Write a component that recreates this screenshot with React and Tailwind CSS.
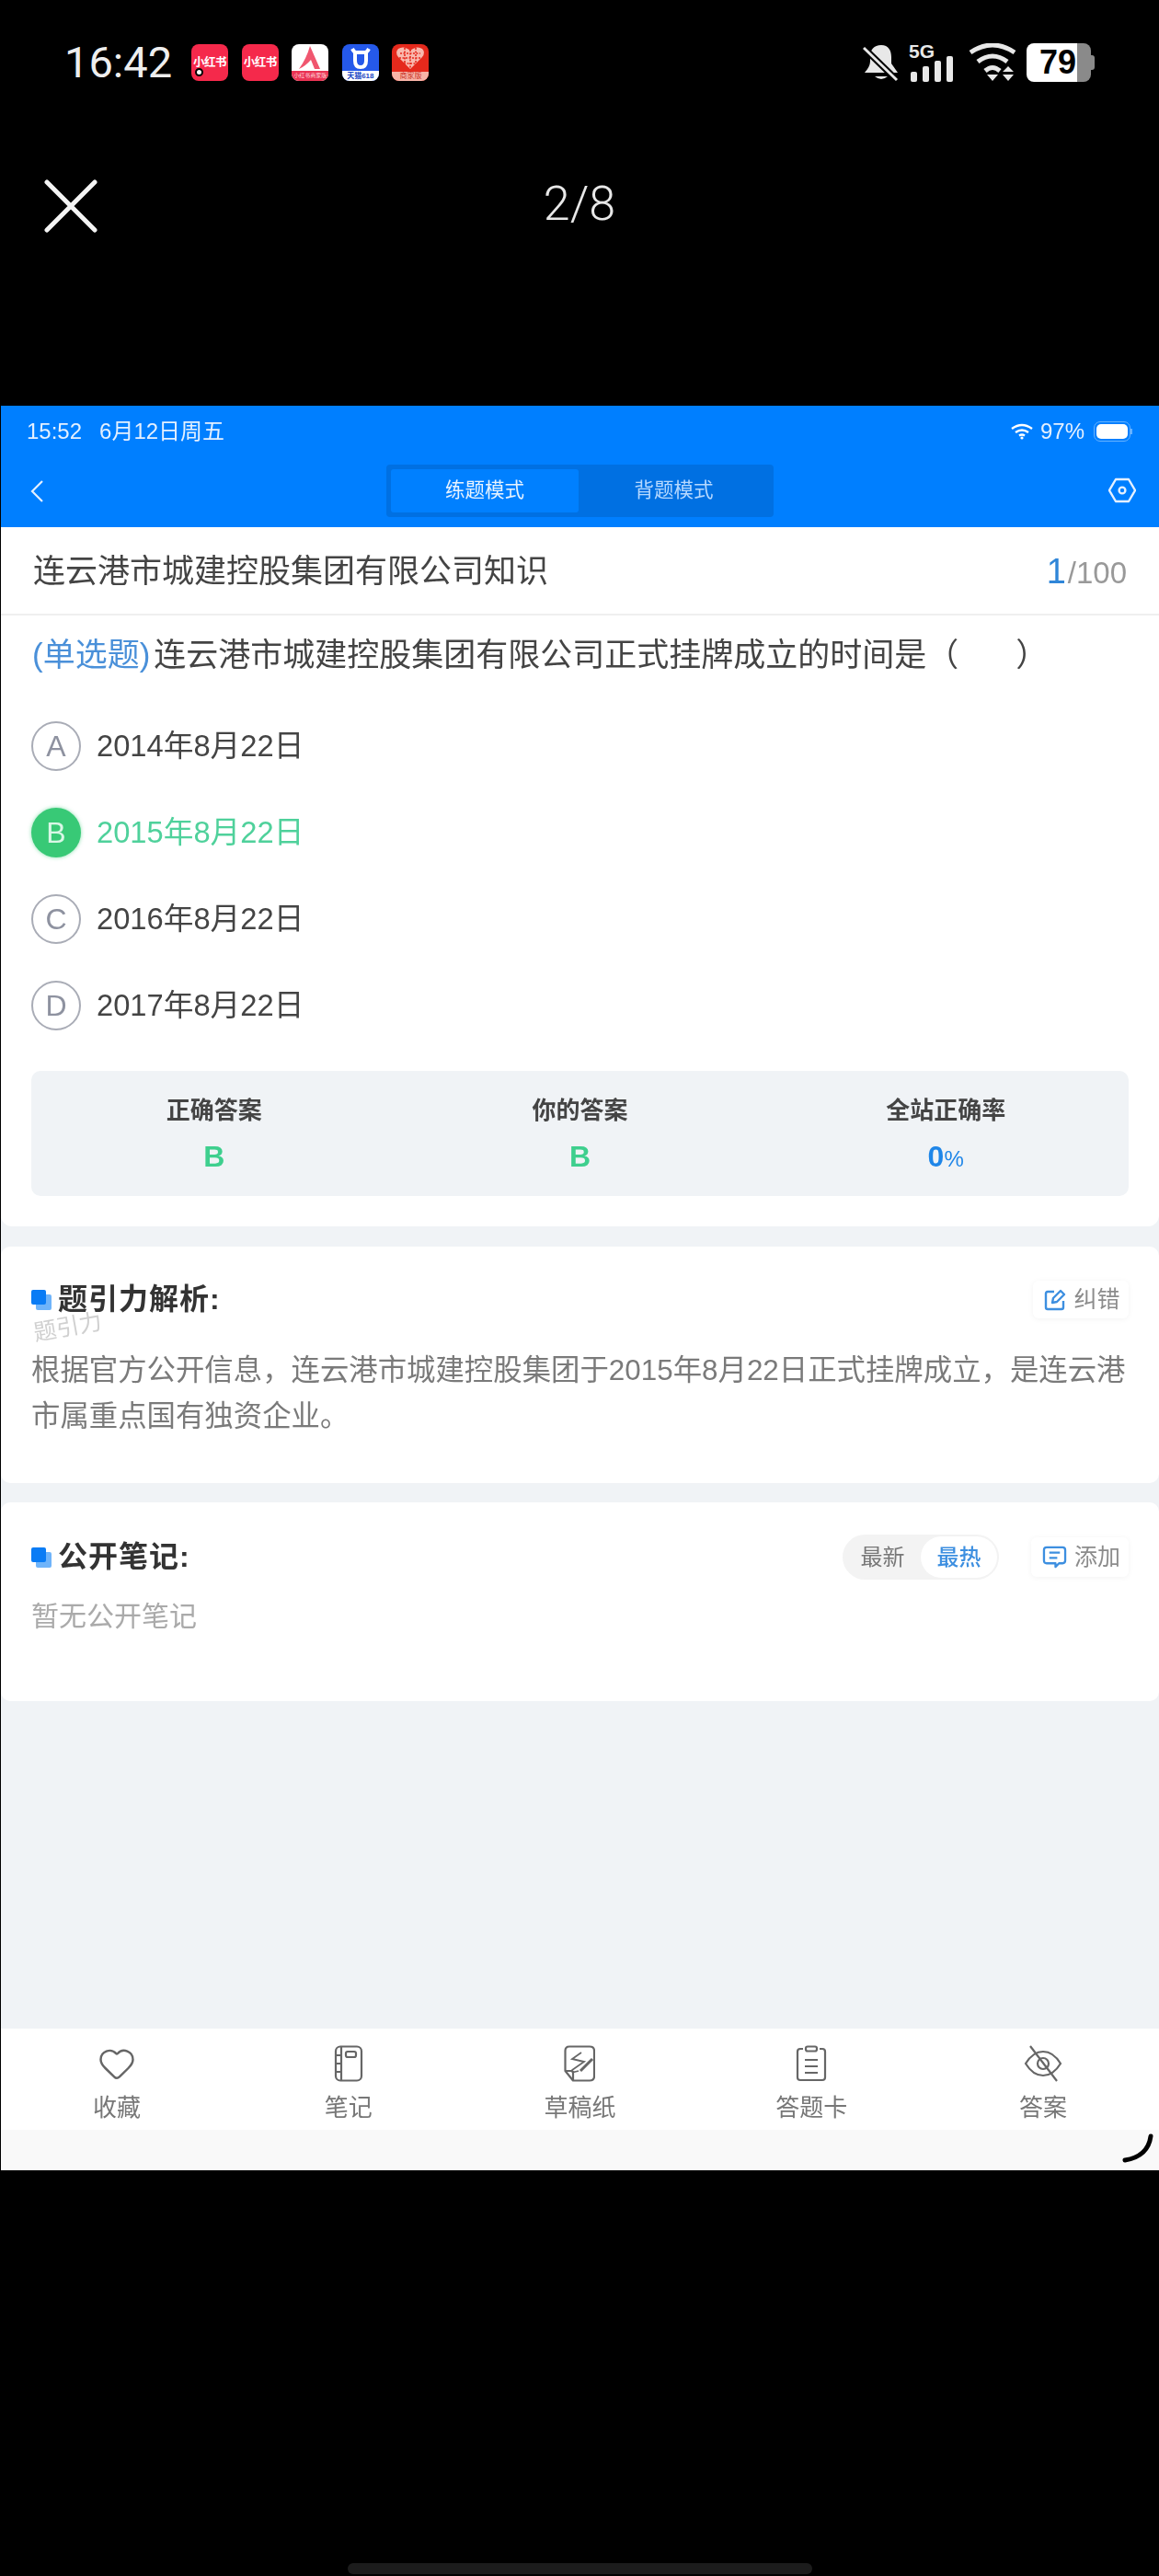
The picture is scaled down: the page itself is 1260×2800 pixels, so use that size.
import { Heart } from "lucide-react";

const options = [
  { key: "A", text: "2014年8月22日" },
  { key: "B", text: "2015年8月22日", correct: true },
  { key: "C", text: "2016年8月22日" },
  { key: "D", text: "2017年8月22日" },
];

const RedBookIcon = ({ dot }) => (
  <div className="relative w-[40px] h-[40px] rounded-[8px] bg-[#f5294b] flex items-center justify-center">
    <span className="text-white text-[12.5px] font-bold leading-none whitespace-nowrap tracking-[-0.5px]">小红书</span>
    {dot ? <span className="absolute left-[4px] bottom-[5px] w-[9px] h-[9px] rounded-full bg-white border-[2px] border-black" /> : null}
  </div>
);

const AppIcons = () => (
  <div className="flex gap-[14.6px] ml-[21px]">
    <RedBookIcon dot />
    <RedBookIcon />
    <div className="w-[40px] h-[40px] rounded-[8px] overflow-hidden bg-white flex flex-col">
      <svg viewBox="0 0 40 29" className="w-[40px] h-[29px]">
        <path d="M20 2 L31 27 L25 27 L21 17 Q15 24 8 27 Q16 16 20 2 Z" fill="#f0566f" />
      </svg>
      <div className="flex-1 bg-[#ea3353] text-[#ffd5dc] text-[6px] leading-[11px] text-center whitespace-nowrap">小红书商家版</div>
    </div>
    <div className="w-[40px] h-[40px] rounded-[8px] overflow-hidden bg-[#2559ea] flex flex-col">
      <svg viewBox="0 0 40 29" className="w-[40px] h-[29px]">
        <path d="M11 5 Q13 9 15 9 L25 9 Q27 9 29 5 M14 9 L14 18 Q14 25 20 25 Q26 25 26 18 L26 9" fill="none" stroke="#fff" strokeWidth="4" />
      </svg>
      <div className="flex-1 bg-white text-[#1c47c4] text-[8px] font-bold leading-[11px] text-center whitespace-nowrap">天猫618</div>
    </div>
    <div className="w-[40px] h-[40px] rounded-[8px] overflow-hidden bg-[#e5291c] flex flex-col">
      <svg viewBox="0 0 40 30" className="w-[40px] h-[30px]">
        <path d="M20 27 L7 14 Q3 9 7 5 Q13 1 20 7 Q27 1 33 5 Q37 9 33 14 Z" fill="#f8b9ae" />
        <path d="M20 6 V27 M9 10 H31 M8 15 H32 M13 21 H27 M14 4 L14 20 M26 4 L26 20" stroke="#e5291c" strokeWidth="1.6" strokeDasharray="2 1.5" fill="none" />
      </svg>
      <div className="flex-1 bg-[#f8b4a8] text-[#c9301f] text-[8px] leading-[10px] text-center whitespace-nowrap">商家版</div>
    </div>
  </div>
);

const PhoneStatusRight = () => (
  <div className="flex items-center ml-auto mr-[70px] h-[42px]">
    <svg viewBox="0 0 40 42" className="w-[40px] h-[42px]">
      <path d="M20 2 C28 2 31 8 31 15 L31 22 L38 32 L2 32 C5 28 8 25 8 19 L8 14 C8 7 12 2 20 2 Z" fill="#e8e8e8" />
      <path d="M13 36 Q20 42 27 36 Z" fill="#e8e8e8" />
      <path d="M1 5 L37 40" stroke="#000" strokeWidth="7" />
      <path d="M1 5 L37 40" stroke="#e8e8e8" strokeWidth="3" />
    </svg>
    <div className="relative w-[50px] h-[42px] ml-[12px]">
      <span className="absolute left-[-2px] top-[-3px] text-[#e8e8e8] text-[21px] font-bold leading-[24px]">5G</span>
      <div className="absolute left-0 bottom-0 flex items-end gap-[6px]">
        <span className="w-[7px] h-[11px] rounded-[2px] bg-[#e8e8e8]" />
        <span className="w-[7px] h-[17px] rounded-[2px] bg-[#e8e8e8]" />
        <span className="w-[7px] h-[23px] rounded-[2px] bg-[#e8e8e8]" />
        <span className="w-[7px] h-[28px] rounded-[2px] bg-[#e8e8e8]" />
      </div>
    </div>
    <svg viewBox="0 0 54 42" className="w-[54px] h-[42px] ml-[12px]">
      <path d="M3 10 Q27 -6 51 10" fill="none" stroke="#e8e8e8" strokeWidth="5" />
      <path d="M11 20 Q27 8 43 20" fill="none" stroke="#e8e8e8" strokeWidth="5" />
      <path d="M19 30 Q27 23 35 30" fill="none" stroke="#e8e8e8" strokeWidth="5" />
      <path d="M21 34 L33 34 L27 41 Z M38 31 L50 31 L44 25 Z M38 34 L50 34 L44 41 Z" fill="#e8e8e8" />
    </svg>
    <div className="flex items-center ml-[10px]">
      <div className="flex w-[70px] h-[42px] rounded-[8px] overflow-hidden">
        <div className="w-[55px] bg-white text-black text-[36px] font-bold leading-[42px] text-right pr-[1px]">79</div>
        <div className="flex-1 bg-[#8a8a8a]" />
      </div>
      <div className="w-[4px] h-[16px] rounded-r-[3px] bg-[#8a8a8a]" />
    </div>
  </div>
);

const TitleIcon = () => (
  <span className="relative w-[22px] h-[22px] shrink-0">
    <span className="absolute left-[5px] top-[5px] w-[17px] h-[17px] rounded-[2px] bg-[#6fb4fa]" />
    <span className="absolute left-0 top-0 w-[16px] h-[16px] rounded-[2px] bg-[#0a7cf5]" />
  </span>
);

const SectionTitle = ({ children }) => (
  <div className="flex items-center gap-[7px]">
    <TitleIcon />
    <span className="text-[32px] font-bold leading-[41px] tracking-[1px] text-[#333]">{children}</span>
  </div>
);

const SmallButton = ({ icon, label, className }) => (
  <div className={`flex items-center justify-center gap-[8px] pl-[3px] bg-white rounded-[6px] shadow-[0_1px_6px_rgba(0,0,0,0.05)] ${className}`}>
    {icon}
    <span className="text-[25px] leading-none text-[#8c8c8c]">{label}</span>
  </div>
);

const TabItem = ({ icon, label }) => (
  <div className="flex-1 flex flex-col items-center">
    <div className="h-[44px] flex items-center justify-center">{icon}</div>
    <span className="mt-[8px] text-[26px] leading-[36px] text-[#777]">{label}</span>
  </div>
);

const BottomTabs = () => (
  <div className="h-[110px] bg-white pt-[16px] flex">
    <TabItem label="收藏" icon={<Heart className="w-[42px] h-[42px] text-[#666]" strokeWidth={1.4} />} />
    <TabItem
      label="笔记"
      icon={
        <svg viewBox="0 0 32 40" className="w-[32px] h-[40px]" fill="none" stroke="#666" strokeWidth="2.2">
          <rect x="2" y="1.5" width="28" height="37" rx="5" />
          <path d="M8 2 V38 M2 11 H8 M2 20 H8 M2 29 H8" />
          <rect x="13" y="7" width="11" height="6" rx="2" />
        </svg>
      }
    />
    <TabItem
      label="草稿纸"
      icon={
        <svg viewBox="0 0 34 40" className="w-[34px] h-[40px]" fill="none" stroke="#666" strokeWidth="2.2">
          <path d="M10 38.5 L28 38.5 Q33 38.5 33 34 L33 6 Q33 1.5 28 1.5 L6 1.5 Q1.5 1.5 1.5 6 L1.5 28 Z" strokeLinejoin="round" />
          <path d="M1.5 28 L8 28 Q10 28 10 30 L10 38.5" />
          <path d="M19 8 L9 15 L22 18 L9 27 Q8 30 12 29 L16 28" strokeWidth="1.8" />
          <path d="M18 28 L31 15" strokeWidth="3" />
        </svg>
      }
    />
    <TabItem
      label="答题卡"
      icon={
        <svg viewBox="0 0 34 40" className="w-[34px] h-[40px]" fill="none" stroke="#666" strokeWidth="2.2">
          <path d="M8 4 L5 4 Q2 4 2 7 L2 35 Q2 38 5 38 L29 38 Q32 38 32 35 L32 7 Q32 4 29 4 L26 4" />
          <rect x="11" y="1.5" width="12" height="5" rx="2" />
          <path d="M10 16 H24 M10 23 H24 M10 30 H24" />
        </svg>
      }
    />
    <TabItem
      label="答案"
      icon={
        <svg viewBox="0 0 42 40" className="w-[42px] h-[40px]" fill="none" stroke="#666" strokeWidth="2.2">
          <path d="M2 20 Q10 7 21 7 Q32 7 40 20 Q32 33 21 33 Q10 33 2 20 Z" />
          <circle cx="21" cy="20" r="6" />
          <path d="M7 1 L36 39" />
        </svg>
      }
    />
  </div>
);

const App = () => {
  return (
    <div className="w-[1260px] h-[2800px] bg-black flex flex-col [font-family:'Liberation_Sans','Noto_Sans_CJK_SC',sans-serif]">
      <div className="h-[110px] pt-[47px] flex pl-[70px]">
        <div className="flex items-center h-[42px]">
          <span className="text-[47px] leading-[42px] font-normal text-[#eeeeee] [font-family:Roboto,sans-serif]">16:42</span>
          <AppIcons />
        </div>
        <PhoneStatusRight />
      </div>

      <div className="h-[331px] relative">
        <div className="pl-[48px] pt-[85px] flex">
          <svg viewBox="0 0 58 58" className="w-[58px] h-[58px]" fill="none" stroke="#f4f4f4" strokeWidth="5" strokeLinecap="round">
            <path d="M3 3 L55 55 M55 3 L3 55" />
          </svg>
        </div>
        <div className="absolute left-0 right-0 top-[84px] text-center text-[52px] leading-[56px] font-light text-[#e8e8e8] [font-family:Roboto,sans-serif]">2/8</div>
      </div>

      <div className="ml-px h-[1918px] bg-[#f0f3f6] flex flex-col blur-[0.4px]">
        <div className="h-[132px] bg-[#007fff]">
          <div className="h-[55px] flex items-center pl-[28px] pr-[29px] text-[24px] text-[#e4f0ff]">
            <span>15:52</span>
            <span className="ml-[19px]">6月12日周五</span>
            <svg viewBox="0 0 24 18" className="w-[24px] h-[18px] ml-auto" fill="none" stroke="#fff" strokeWidth="2.4">
              <path d="M1 6 Q12 -2 23 6 M5 10 Q12 5 19 10 M9 13.5 Q12 11.5 15 13.5" />
              <circle cx="12" cy="16" r="1.6" fill="#fff" stroke="none" />
            </svg>
            <span className="ml-[8px]">97%</span>
            <div className="ml-[10px] w-[40px] h-[22px] rounded-[7px] border border-[#66b2ff] p-[2px]">
              <div className="w-full h-full rounded-[5px] bg-white" />
            </div>
            <div className="w-[2px] h-[6px] bg-[#66b2ff]" />
          </div>
          <div className="h-[77px] flex items-start pl-[31px] pr-[25px]">
            <svg viewBox="0 0 16 24" className="w-[16px] h-[24px] mt-[26px]" fill="none" stroke="#e4f0ff" strokeWidth="2.2">
              <path d="M14 1 L3 12 L14 23" />
            </svg>
            <div className="ml-[372px] mt-[9px] w-[421px] h-[57px] bg-[#0070e2] rounded-[4px] flex p-[5px]">
              <div className="w-[204px] bg-[#0080ff] rounded-[3px] flex items-center justify-center text-[21.5px] text-[#e6f2ff]">练题模式</div>
              <div className="flex-1 flex items-center justify-center text-[21.5px] text-[#b5d8ff]">背题模式</div>
            </div>
            <svg viewBox="0 0 30 28" className="w-[30px] h-[28px] mt-[23px] ml-auto" fill="none" stroke="#e4f0ff" strokeWidth="2.4">
              <path d="M8 2 L22 2 L29 14 L22 26 L8 26 L1 14 Z" strokeLinejoin="round" />
              <circle cx="15" cy="14" r="3.4" />
            </svg>
          </div>
        </div>

        <div className="bg-white rounded-b-[12px] pb-[33px]">
          <div className="h-[96px] border-b-2 border-[#efefef] flex items-center justify-between pl-[35px] pr-[35px] pt-[3px]">
            <span className="text-[35px] text-[#444]">连云港市城建控股集团有限公司知识</span>
            <span className="flex items-baseline text-[#999]">
              <span className="text-[38px] font-medium text-[#2f86d8] mr-[2px]">1</span>
              <span className="text-[33px]">/100</span>
            </span>
          </div>
          <div className="h-[86px] flex items-center pl-[34px] text-[35px] text-[#444] whitespace-nowrap">
            <span className="text-[#4a90d9] mr-[4px]">(单选题)</span>
            <span>连云港市城建控股集团有限公司正式挂牌成立的时间是</span>
            <span>（</span>
            <span className="ml-[62px]">）</span>
          </div>
          <div className="pt-[9px] pl-[33px]">
            {options.map((opt) => (
              <div key={opt.key} className="h-[94px] flex items-center">
                {opt.correct ? (
                  <span className="w-[54px] h-[54px] rounded-full bg-[#38c976] shadow-[0_0_4px_rgba(56,201,118,0.6)] text-[#d9f7e6] flex items-center justify-center text-[32px]">{opt.key}</span>
                ) : (
                  <span className="w-[54px] h-[54px] rounded-full border-2 border-[#a9acb6] text-[#8e92a0] flex items-center justify-center text-[32px]">{opt.key}</span>
                )}
                <span className={`ml-[17px] text-[32.7px] ${opt.correct ? "text-[#4fd19b]" : "text-[#444]"}`}>{opt.text}</span>
              </div>
            ))}
          </div>
          <div className="mt-[24px] ml-[33px] mr-[33px] h-[136px] rounded-[10px] bg-[#f0f3f6] grid grid-cols-3 text-center">
            <div className="pt-[25px]">
              <div className="text-[26px] font-bold leading-[36px] text-[#444]">正确答案</div>
              <div className="mt-[14px] text-[32px] font-bold leading-[36px] text-[#3ecf8e]">B</div>
            </div>
            <div className="pt-[25px]">
              <div className="text-[26px] font-bold leading-[36px] text-[#444]">你的答案</div>
              <div className="mt-[14px] text-[32px] font-bold leading-[36px] text-[#3ecf8e]">B</div>
            </div>
            <div className="pt-[25px]">
              <div className="text-[26px] font-bold leading-[36px] text-[#444]">全站正确率</div>
              <div className="mt-[14px] text-[32px] font-bold leading-[36px] text-[#1f86e8]">
                0<span className="text-[24px] font-normal">%</span>
              </div>
            </div>
          </div>
        </div>

        <div className="relative mt-[22px] h-[257px] bg-white rounded-[10px] pt-[37px] pl-[33px] pr-[33px]">
          <div className="flex items-center justify-between">
            <SectionTitle>题引力解析:</SectionTitle>
            <SmallButton
              className="w-[104px] h-[41px]"
              label="纠错"
              icon={
                <svg viewBox="0 0 24 24" className="w-[24px] h-[24px]" fill="none" stroke="#3d8fe0" strokeWidth="2.4">
                  <path d="M11 3 L4 3 Q2 3 2 5 L2 20 Q2 22 4 22 L19 22 Q21 22 21 20 L21 13" />
                  <path d="M9 15 L10 10 L18 2 L22 6 L14 14 Z" strokeLinejoin="round" />
                </svg>
              }
            />
          </div>
          <div className="absolute left-[35px] top-[73px] text-[25px] leading-[28px] text-[#d0d0d0] -rotate-[10deg]">题引力</div>
          <p className="mt-[32px] text-[31.4px] leading-[50px] text-[#7a7a7a] whitespace-nowrap">
            根据官方公开信息，连云港市城建控股集团于2015年8月22日正式挂牌成立，是连云港
            <br />
            市属重点国有独资企业。
          </p>
        </div>

        <div className="mt-[21px] h-[216px] bg-white rounded-[10px] pt-[35px] pl-[33px] pr-[33px]">
          <div className="flex items-center justify-between h-[49px]">
            <SectionTitle>公开笔记:</SectionTitle>
            <div className="flex items-center">
              <div className="w-[170px] h-[49px] rounded-full bg-[#f3f3f3] flex items-center p-[2px]">
                <span className="w-[83px] text-center text-[24px] text-[#777]">最新</span>
                <span className="w-[83px] h-[45px] rounded-full bg-white flex items-center justify-center text-[24px] font-medium text-[#3d8fe0]">最热</span>
              </div>
              <SmallButton
                className="ml-[35px] w-[106px] h-[43px]"
                label="添加"
                icon={
                  <svg viewBox="0 0 28 26" className="w-[27px] h-[25px]" fill="none" stroke="#3d8fe0" strokeWidth="2.4">
                    <path d="M5 2 L23 2 Q26 2 26 5 L26 17 Q26 20 23 20 L19 20 L15 24 L15 20 L5 20 Q2 20 2 17 L2 5 Q2 2 5 2 Z" strokeLinejoin="round" />
                    <path d="M8 8 H20 M8 14 H17" />
                  </svg>
                }
              />
            </div>
          </div>
          <p className="mt-[20px] text-[30px] leading-[40px] text-[#aaa]">暂无公开笔记</p>
        </div>

        <div className="flex-1" />

        <BottomTabs />
        <div className="relative h-[44px] bg-[#f9f9f9]">
          <svg viewBox="0 0 34 32" className="absolute right-[6px] top-[4px] w-[34px] h-[32px]" fill="none" stroke="#000" strokeWidth="5" strokeLinecap="round">
            <path d="M31 3 Q28 25 3 29" />
          </svg>
        </div>
      </div>

      <div className="flex-1 flex items-end justify-center pb-[2px]">
        <div className="w-[505px] h-[12px] rounded-full bg-[#1c1c1c]" />
      </div>
    </div>
  );
};

export default App;
